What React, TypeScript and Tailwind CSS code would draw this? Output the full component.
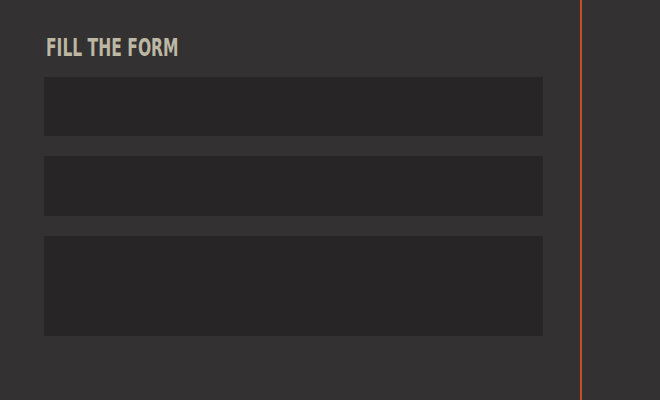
import React from 'react';

const fieldClasses = "block w-[499px] bg-[#272526] border-0 outline-none text-[#bdb8a4] px-4";

export default function App() {
  return (
    <div className="flex w-[660px] h-[400px] bg-[#333132] overflow-hidden">
      <div className="w-[580px] shrink-0 pl-[44px] pt-[35px]">
        <h2
          className="ml-[2px] h-[26px] text-[24px] leading-[26px] font-bold uppercase text-[#bdb8a4] whitespace-nowrap origin-left scale-x-[0.72]"
          style={{ fontFamily: '"DejaVu Sans Condensed", "DejaVu Sans", sans-serif' }}
        >
          Fill the form
        </h2>
        <form className="mt-[16px] flex flex-col gap-[20px]">
          <input type="text" className={`${fieldClasses} h-[59px]`} />
          <input type="email" className={`${fieldClasses} h-[60px]`} />
          <textarea className={`${fieldClasses} h-[100px] resize-none py-3`} />
        </form>
      </div>
      <div className="w-[2px] shrink-0 bg-[#c4502a]" />
      <div className="flex-1" />
    </div>
  );
}
